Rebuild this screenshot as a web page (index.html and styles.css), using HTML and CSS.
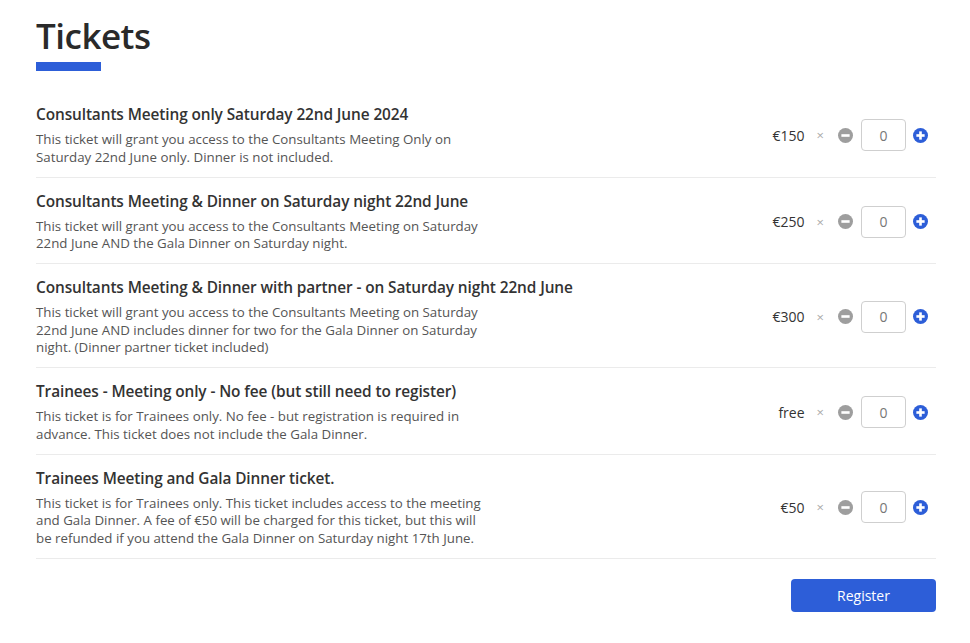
FILE: index.html
```html
<!DOCTYPE html>
<html>
<head>
<meta charset="utf-8">
<link rel="stylesheet" href="styles.css">
</head>
<body>
<div class="page">
  <h1 class="heading">Tickets</h1>
  <div class="bar"></div>
  <div class="list">
    <div class="row">
      <div class="info">
        <div class="name">Consultants Meeting only Saturday 22nd June 2024</div>
        <div class="desc">This ticket will grant you access to the Consultants Meeting Only on Saturday 22nd June only. Dinner is not included.</div>
      </div>
      <div class="ctrl">
        <span class="price">€150</span><span class="times">×</span>
        <span class="btn minus"><svg viewBox="0 0 16 16" width="15" height="15"><circle cx="8" cy="8" r="8" fill="#9e9e9e"/><rect x="3.6" y="6.6" width="8.8" height="2.8" fill="#fff"/></svg></span>
        <span class="qty">0</span>
        <span class="btn plus"><svg viewBox="0 0 16 16" width="15" height="15"><circle cx="8" cy="8" r="8" fill="#2d5ed8"/><rect x="3.6" y="6.6" width="8.8" height="2.8" fill="#fff"/><rect x="6.6" y="3.6" width="2.8" height="8.8" fill="#fff"/></svg></span>
      </div>
    </div>
    <div class="row">
      <div class="info">
        <div class="name">Consultants Meeting &amp; Dinner on Saturday night 22nd June</div>
        <div class="desc">This ticket will grant you access to the Consultants Meeting on Saturday 22nd June AND the Gala Dinner on Saturday night.</div>
      </div>
      <div class="ctrl">
        <span class="price">€250</span><span class="times">×</span>
        <span class="btn minus"><svg viewBox="0 0 16 16" width="15" height="15"><circle cx="8" cy="8" r="8" fill="#9e9e9e"/><rect x="3.6" y="6.6" width="8.8" height="2.8" fill="#fff"/></svg></span>
        <span class="qty">0</span>
        <span class="btn plus"><svg viewBox="0 0 16 16" width="15" height="15"><circle cx="8" cy="8" r="8" fill="#2d5ed8"/><rect x="3.6" y="6.6" width="8.8" height="2.8" fill="#fff"/><rect x="6.6" y="3.6" width="2.8" height="8.8" fill="#fff"/></svg></span>
      </div>
    </div>
    <div class="row">
      <div class="info">
        <div class="name">Consultants Meeting &amp; Dinner with partner - on Saturday night 22nd June</div>
        <div class="desc">This ticket will grant you access to the Consultants Meeting on Saturday 22nd June AND includes dinner for two for the Gala Dinner on Saturday night. (Dinner partner ticket included)</div>
      </div>
      <div class="ctrl">
        <span class="price">€300</span><span class="times">×</span>
        <span class="btn minus"><svg viewBox="0 0 16 16" width="15" height="15"><circle cx="8" cy="8" r="8" fill="#9e9e9e"/><rect x="3.6" y="6.6" width="8.8" height="2.8" fill="#fff"/></svg></span>
        <span class="qty">0</span>
        <span class="btn plus"><svg viewBox="0 0 16 16" width="15" height="15"><circle cx="8" cy="8" r="8" fill="#2d5ed8"/><rect x="3.6" y="6.6" width="8.8" height="2.8" fill="#fff"/><rect x="6.6" y="3.6" width="2.8" height="8.8" fill="#fff"/></svg></span>
      </div>
    </div>
    <div class="row">
      <div class="info">
        <div class="name">Trainees - Meeting only - No fee (but still need to register)</div>
        <div class="desc">This ticket is for Trainees only. No fee - but registration is required in advance. This ticket does not include the Gala Dinner.</div>
      </div>
      <div class="ctrl">
        <span class="price">free</span><span class="times">×</span>
        <span class="btn minus"><svg viewBox="0 0 16 16" width="15" height="15"><circle cx="8" cy="8" r="8" fill="#9e9e9e"/><rect x="3.6" y="6.6" width="8.8" height="2.8" fill="#fff"/></svg></span>
        <span class="qty">0</span>
        <span class="btn plus"><svg viewBox="0 0 16 16" width="15" height="15"><circle cx="8" cy="8" r="8" fill="#2d5ed8"/><rect x="3.6" y="6.6" width="8.8" height="2.8" fill="#fff"/><rect x="6.6" y="3.6" width="2.8" height="8.8" fill="#fff"/></svg></span>
      </div>
    </div>
    <div class="row">
      <div class="info">
        <div class="name">Trainees Meeting and Gala Dinner ticket.</div>
        <div class="desc">This ticket is for Trainees only. This ticket includes access to the meeting and Gala Dinner. A fee of €50 will be charged for this ticket, but this will be refunded if you attend the Gala Dinner on Saturday night 17th June.</div>
      </div>
      <div class="ctrl">
        <span class="price">€50</span><span class="times">×</span>
        <span class="btn minus"><svg viewBox="0 0 16 16" width="15" height="15"><circle cx="8" cy="8" r="8" fill="#9e9e9e"/><rect x="3.6" y="6.6" width="8.8" height="2.8" fill="#fff"/></svg></span>
        <span class="qty">0</span>
        <span class="btn plus"><svg viewBox="0 0 16 16" width="15" height="15"><circle cx="8" cy="8" r="8" fill="#2d5ed8"/><rect x="3.6" y="6.6" width="8.8" height="2.8" fill="#fff"/><rect x="6.6" y="3.6" width="2.8" height="8.8" fill="#fff"/></svg></span>
      </div>
    </div>
  </div>
  <div class="actions">
    <button class="register">Register</button>
  </div>
</div>
</body>
</html>
```
FILE: styles.css
```css
* { box-sizing: border-box; }
html, body { margin: 0; padding: 0; background: #fff; }
body {
  font-family: "Open Sans", "Noto Sans", "Liberation Sans", sans-serif;
  color: #333;
}
.page {
  width: 900px;
  margin-left: 36px;
  padding-top: 13px;
}
.heading {
  margin: 0;
  font-size: 35px;
  font-weight: 600;
  line-height: 45px;
  color: #2a2a2a;
  letter-spacing: -0.5px;
}
.bar {
  width: 65px;
  height: 9px;
  background: #2d5ed8;
  margin-top: 4px;
}
.list {
  margin-top: 20px;
}
.row {
  display: flex;
  align-items: center;
  justify-content: space-between;
  padding: 13px 0 10.5px;
  border-bottom: 1px solid #ebebeb;
}
.info { width: 640px; }
.name {
  font-size: 15.4px;
  font-weight: 600;
  line-height: 22px;
  color: #333;
  letter-spacing: -0.1px;
}
.desc {
  max-width: 455px;
  margin-top: 5px;
  font-size: 13.3px;
  line-height: 17.5px;
  color: #555;
}
.ctrl {
  display: flex;
  align-items: center;
  padding-right: 8px;
}
.price {
  font-size: 14px;
  color: #333;
  text-align: right;
}
.times {
  color: #aaa;
  font-size: 13px;
  margin-left: 12px;
  margin-right: 14px;
}
.btn { display: flex; }
.qty {
  width: 45px;
  height: 32px;
  border: 1px solid #cfcfcf;
  border-radius: 4px;
  margin-left: 8px;
  margin-right: 7px;
  display: flex;
  align-items: center;
  justify-content: center;
  font-size: 14px;
  color: #777;
}
.actions {
  display: flex;
  justify-content: flex-end;
  margin-top: 20px;
}
.register {
  width: 145px;
  height: 33px;
  border: none;
  border-radius: 4px;
  background: #2d5ed8;
  color: #fff;
  font-family: inherit;
  font-size: 14px;
}
```
